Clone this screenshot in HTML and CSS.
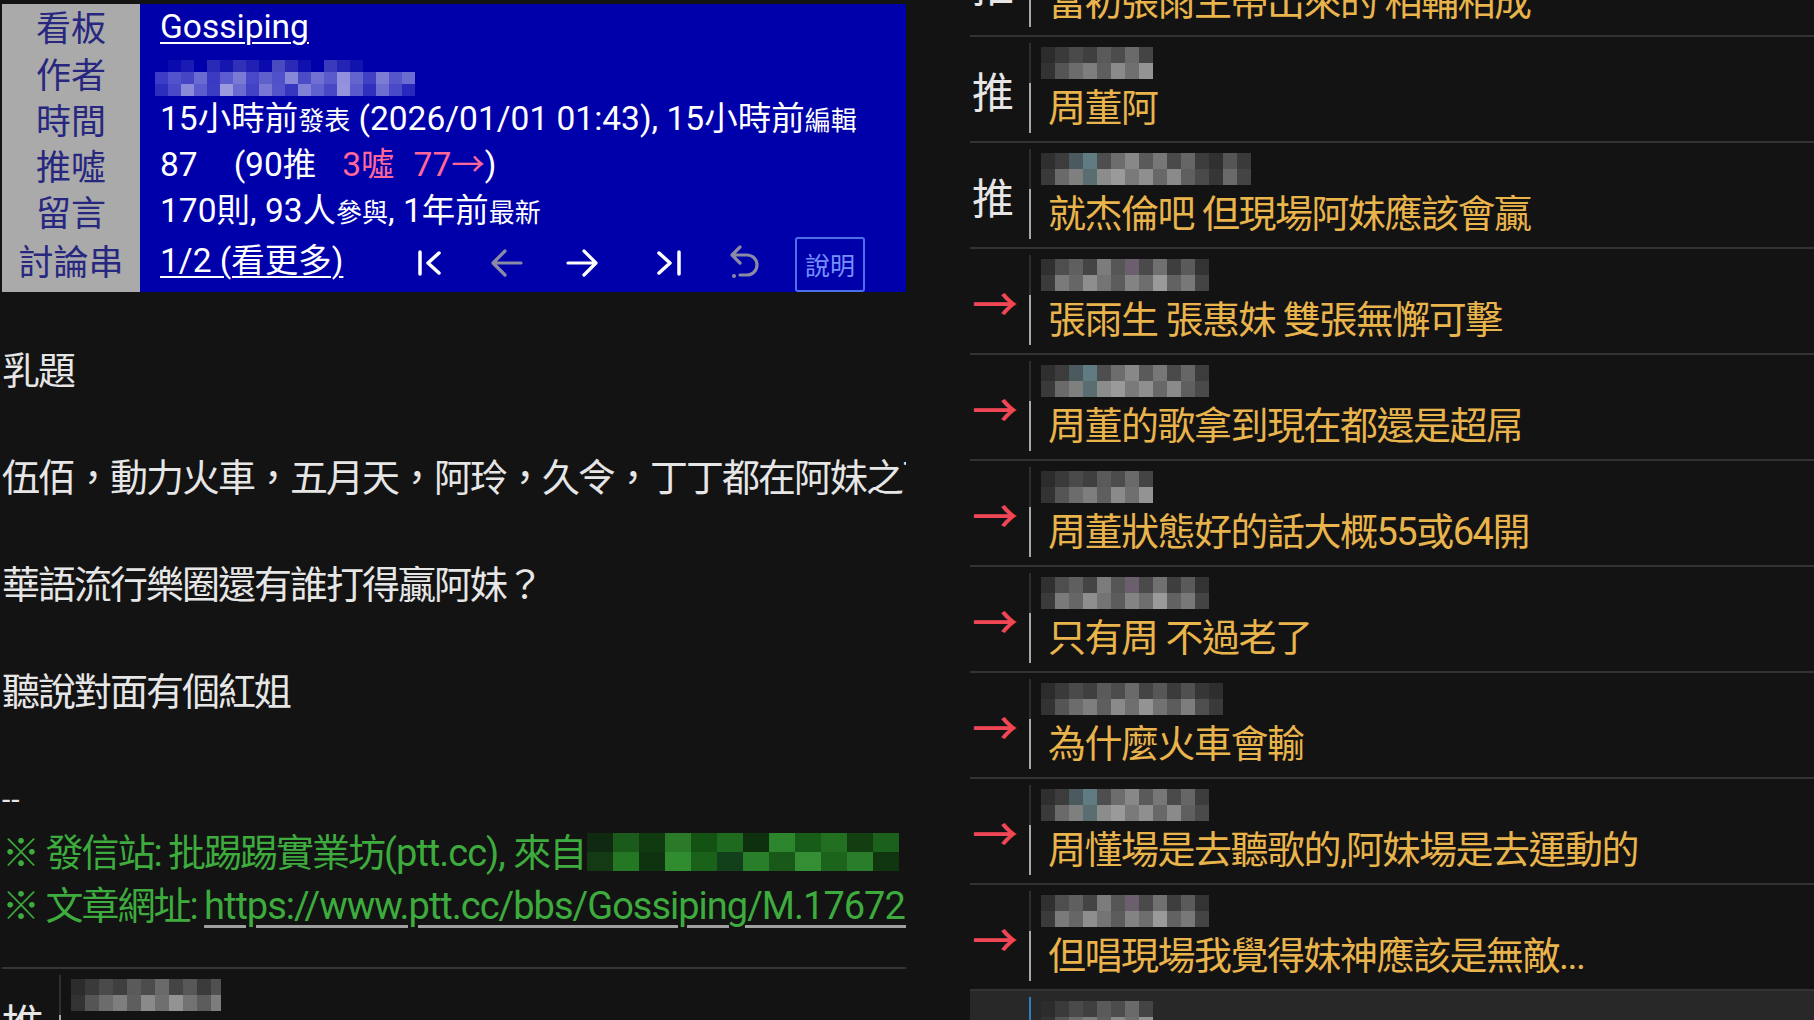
FILE: index.html
```html
<!DOCTYPE html>
<html lang="zh-Hant">
<head>
<meta charset="utf-8">
<title>Gossiping</title>
<link rel="stylesheet" href="styles.css">
</head>
<body>
<div class="page">
  <div class="main">
    <div class="meta">
      <div class="lbl">看板</div>
      <div class="val"><span class="link">Gossiping</span></div>
      <div class="lbl">作者</div>
      <div class="val"><span class="blur author"></span></div>
      <div class="lbl">時間</div>
      <div class="val">15小時前<small>發表</small> (2026/01/01 01:43), 15小時前<small>編輯</small></div>
      <div class="lbl">推噓</div>
      <div class="val">87<span class="gap1">(90推</span><span class="boo gap2">3噓</span><span class="boo gap3">77→</span>)</div>
      <div class="lbl">留言</div>
      <div class="val">170則, 93人<small>參與</small>, 1年前<small>最新</small></div>
      <div class="lbl lbl-last">討論串</div>
      <div class="val nav">
        <span class="thread"><span class="link">1/2 (看更多)</span></span>
        <svg class="ic ic-first" width="28" height="26" viewBox="0 0 28 26"><path d="M3 2v22M22 3L11 13l11 10" stroke="#fff" stroke-width="3.5" fill="none" stroke-linecap="round" stroke-linejoin="round"/></svg>
        <svg class="ic ic-prev" width="34" height="30" viewBox="0 0 34 30"><path d="M31 15H4M15 3L3 15l12 12" stroke="#8a8aa6" stroke-width="3.2" fill="none" stroke-linecap="round" stroke-linejoin="round"/></svg>
        <svg class="ic ic-next" width="34" height="30" viewBox="0 0 34 30"><path d="M3 15h27M19 3l12 12-12 12" stroke="#fff" stroke-width="3.2" fill="none" stroke-linecap="round" stroke-linejoin="round"/></svg>
        <svg class="ic ic-last" width="28" height="26" viewBox="0 0 28 26"><path d="M5 3l11 10L5 23M25 2v22" stroke="#fff" stroke-width="3.5" fill="none" stroke-linecap="round" stroke-linejoin="round"/></svg>
        <svg class="ic ic-undo" width="34" height="38" viewBox="0 0 34 38"><path d="M12 3L4 11l8 8M4 11h15a10 10 0 0 1 0 20h-7" stroke="#8a8aa6" stroke-width="3.2" fill="none" stroke-linecap="round" stroke-linejoin="round"/><circle cx="6" cy="32" r="2" fill="#8a8aa6"/></svg>
        <span class="help">說明</span>
      </div>
    </div>

    <div class="post">
      <div class="ln">乳題</div>
      <div class="ln"></div>
      <div class="ln">伍佰，動力火車，五月天，阿玲，久令，丁丁都在阿妹之下</div>
      <div class="ln"></div>
      <div class="ln">華語流行樂圈還有誰打得贏阿妹？</div>
      <div class="ln"></div>
      <div class="ln">聽說對面有個紅姐</div>
      <div class="ln"></div>
      <div class="ln dashes">--</div>
      <div class="ln green">※ 發信站: 批踢踢實業坊<span class="latin">(ptt.cc), </span>來自<span class="blur ip"></span></div>
      <div class="ln green">※ 文章網址: <span class="url">https://www.ptt.cc/bbs/Gossiping/M.1767202986.A.5B2.html</span></div>
    </div>
    <div class="sep"></div>
    <div class="row row-left">
      <div class="tag push">推</div>
      <div class="cbody">
        <div class="user"><span class="blur g1 w150"></span></div>
        <div class="msg"></div>
      </div>
    </div>
  </div>

  <div class="side">
    <div class="row">
      <div class="tag push">推</div>
      <div class="cbody"><div class="user"><span class="blur g2 w150"></span></div><div class="msg">當初張雨生帶出來的 相輔相成</div></div>
    </div>
    <div class="row">
      <div class="tag push">推</div>
      <div class="cbody"><div class="user"><span class="blur g1 w112"></span></div><div class="msg">周董阿</div></div>
    </div>
    <div class="row">
      <div class="tag push">推</div>
      <div class="cbody"><div class="user"><span class="blur g2 w210"></span></div><div class="msg">就杰倫吧 但現場阿妹應該會贏</div></div>
    </div>
    <div class="row">
      <div class="tag arrow">→</div>
      <div class="cbody"><div class="user"><span class="blur g3 w168"></span></div><div class="msg">張雨生 張惠妹 雙張無懈可擊</div></div>
    </div>
    <div class="row">
      <div class="tag arrow">→</div>
      <div class="cbody"><div class="user"><span class="blur g2 w168"></span></div><div class="msg">周董的歌拿到現在都還是超屌</div></div>
    </div>
    <div class="row">
      <div class="tag arrow">→</div>
      <div class="cbody"><div class="user"><span class="blur g1 w112"></span></div><div class="msg">周董狀態好的話大概55或64開</div></div>
    </div>
    <div class="row">
      <div class="tag arrow">→</div>
      <div class="cbody"><div class="user"><span class="blur g3 w168"></span></div><div class="msg">只有周 不過老了</div></div>
    </div>
    <div class="row">
      <div class="tag arrow">→</div>
      <div class="cbody"><div class="user"><span class="blur g1 w182"></span></div><div class="msg">為什麼火車會輸</div></div>
    </div>
    <div class="row">
      <div class="tag arrow">→</div>
      <div class="cbody"><div class="user"><span class="blur g2 w168"></span></div><div class="msg">周懂場是去聽歌的,阿妹場是去運動的</div></div>
    </div>
    <div class="row">
      <div class="tag arrow">→</div>
      <div class="cbody"><div class="user"><span class="blur g3 w168"></span></div><div class="msg">但唱現場我覺得妹神應該是無敵...</div></div>
    </div>
    <div class="row row-active">
      <div class="tag"></div>
      <div class="cbody"><div class="user"><span class="blur g1 w112"></span></div><div class="msg"></div></div>
    </div>
  </div>
</div>
</body>
</html>
```

FILE: styles.css
```css
html, body {
  margin: 0;
  padding: 0;
}

body {
  background: #131313;
  width: 1814px;
  height: 1020px;
  overflow: hidden;
  font-family: Roboto, "Noto Sans CJK TC", sans-serif;
  color: #e6e6e6;
}

.page {
  display: flex;
  height: 1020px;
  overflow: hidden;
}

/* ---------- left column ---------- */
.main {
  width: 904px;
  padding-left: 2px;
  flex: none;
  overflow: hidden;
}

.meta {
  margin-top: 4px;
  display: grid;
  grid-template-columns: 138px 1fr;
  grid-template-rows: repeat(5, 46px) 58px;
  background: #0000aa;
}

.lbl {
  background: #aaaaaa;
  color: #27277f;
  font-family: "Noto Sans CJK TC", sans-serif;
  font-size: 35px;
  line-height: 46px;
  text-align: center;
}

.lbl:first-child {
  line-height: 44px;
}

.lbl-last {
  line-height: 52px;
}

.val {
  padding-left: 20px;
  font-size: 33.5px;
  line-height: 46px;
  color: #ffffff;
  white-space: nowrap;
  overflow: hidden;
}

.val small {
  font-size: 26px;
}

.link {
  text-decoration: underline;
  text-decoration-thickness: 2px;
  text-underline-offset: 4px;
}

.gap1 { margin-left: 36px; }
.gap2 { margin-left: 26px; }
.gap3 { margin-left: 19px; }

.boo {
  color: #ff6699;
}

.nav {
  display: flex;
  align-items: center;
}

.thread {
  display: inline-block;
  width: 196px;
  flex: none;
  margin-top: -4px;
}

.ic {
  flex: none;
  display: block;
}

.ic-first { margin-left: 61px; }
.ic-prev { margin-left: 45px; }
.ic-next { margin-left: 41px; }
.ic-last { margin-left: 55px; }
.ic-undo { margin-left: 46px; }

.help {
  margin-left: 33px;
  width: 70px;
  height: 55px;
  box-sizing: border-box;
  border: 2px solid #4d6fea;
  border-radius: 3px;
  color: #7690ff;
  font-family: "Noto Sans CJK TC", sans-serif;
  font-size: 25px;
  line-height: 1;
  display: flex;
  align-items: center;
  justify-content: center;
  flex: none;
  margin-top: 2px;
}

.post {
  margin-top: 53px;
  font-size: 38px;
  letter-spacing: -2px;
  line-height: 53.5px;
  color: #e6e6e6;
}

.ln {
  height: 53.5px;
  white-space: pre;
}

.dashes {
  letter-spacing: 1px;
  font-size: 30px;
}

.green {
  color: #3dab3d;
}

.latin {
  letter-spacing: -1px;
}

.url {
  letter-spacing: -1px;
  text-decoration: underline;
  text-decoration-color: #a0a0a0;
  text-decoration-thickness: 3px;
  text-underline-offset: 6px;
}

.sep {
  height: 2px;
  background: #353535;
  margin-top: 33px;
}

/* ---------- pixelated (censored) blocks ---------- */
.blur {
  display: inline-block;
  vertical-align: middle;
  height: 32px;
}

.author {
  width: 260px;
  height: 36px;
  margin-left: -5px;
  margin-top: 6px;
  background:
    linear-gradient(90deg, #0000aa 0 13px, #0a0aae 13px 26px, #1a1ab4 26px 39px, #0000aa 39px 52px, #2a2ab8 52px 65px, #1515b0 65px 78px, #3030b8 78px 91px, #2020b4 91px 104px, #0a0aae 104px 117px, #4a4ac0 117px 130px, #2a2ab6 130px 143px, #1010ae 143px 156px, #0000aa 156px 169px, #3a3abc 169px 182px, #2424b4 182px 195px, #1212ae 195px 208px, #0000aa 208px 260px) top / 100% 12px no-repeat,
    linear-gradient(90deg, #3c3cc8 0 13px, #5252cc 13px 26px, #4545c6 26px 39px, #6a6ad0 39px 52px, #3a3ac2 52px 65px, #5c5cd0 65px 78px, #7a7ad4 78px 91px, #4848c8 91px 104px, #6060cc 104px 117px, #5050ca 117px 130px, #8888d8 130px 143px, #4c4cc6 143px 156px, #7070d2 156px 169px, #5a5acc 169px 182px, #9090dc 182px 195px, #6464ce 195px 208px, #4040c4 208px 221px, #7c7cd4 221px 234px, #5656ca 234px 247px, #6c6cd0 247px 260px) center / 100% 12px no-repeat,
    linear-gradient(90deg, #2e2ebe 0 13px, #4a4ac8 13px 26px, #8a8ad8 26px 39px, #5c5cce 39px 52px, #3c3cc2 52px 65px, #9a9adc 65px 78px, #6a6ad0 78px 91px, #4242c4 91px 104px, #7878d4 104px 117px, #5252ca 117px 130px, #3636c0 130px 143px, #8080d6 143px 156px, #6060ce 156px 169px, #4848c6 169px 182px, #9494dc 182px 195px, #5a5acc 195px 208px, #3030be 208px 221px, #6e6ed2 221px 234px, #4a4ac8 234px 247px, #2828bc 247px 260px) bottom / 100% 12px no-repeat;
}

.ip {
  width: 312px;
  height: 38px;
  margin-left: 2px;
  margin-top: -6px;
  background:
    linear-gradient(90deg, #0f2a10 0 26px, #1a5a1a 26px 52px, #103a10 52px 78px, #2a7a2a 78px 104px, #145214 104px 130px, #1e6a1e 130px 156px, #0e300e 156px 182px, #2c842c 182px 208px, #175c17 208px 234px, #226f22 234px 260px, #123e12 260px 286px, #1b601b 286px 312px) top / 100% 19px no-repeat,
    linear-gradient(90deg, #133a13 0 26px, #247824 26px 52px, #0f320f 52px 78px, #2f8c2f 78px 104px, #1a621a 104px 130px, #12401a 130px 156px, #297f29 156px 182px, #185818 182px 208px, #348f34 208px 234px, #1c641c 234px 260px, #2a7d2a 260px 286px, #103610 286px 312px) bottom / 100% 19px no-repeat;
}

.g1 {
  background:
    linear-gradient(90deg, #2c2c2c 0 14px, #3a3a3a 14px 28px, #4a4a4a 28px 42px, #3f3f3f 42px 56px, #5a5a5a 56px 70px, #4c4c4c 70px 84px, #6a6a6a 84px 98px, #444444 98px 112px, #575757 112px 126px, #3b3b3b 126px 140px, #505050 140px 154px, #363636 154px 168px, #2e2e2e 168px 182px) top / 100% 16px no-repeat,
    linear-gradient(90deg, #333333 0 14px, #555555 14px 28px, #6c6c6c 28px 42px, #7e7e7e 42px 56px, #5e5e5e 56px 70px, #8a8a8a 70px 84px, #6f6f6f 84px 98px, #939393 98px 112px, #727272 112px 126px, #5c5c5c 126px 140px, #7d7d7d 140px 154px, #4e4e4e 154px 168px, #3a3a3a 168px 182px) bottom / 100% 16px no-repeat;
}

.g2 {
  background:
    linear-gradient(90deg, #2f2f2f 0 14px, #3c3c3c 14px 28px, #4b5a5e 28px 42px, #607b82 42px 56px, #4e4e4e 56px 70px, #6d6d6d 70px 84px, #888888 84px 98px, #5a5a5a 98px 112px, #777777 112px 126px, #4a4a4a 126px 140px, #666666 140px 154px, #3c3c3c 154px 168px, #303030 168px 182px, #555555 182px 196px, #3a3a3a 196px 210px) top / 100% 16px no-repeat,
    linear-gradient(90deg, #3a3a3a 0 14px, #6a6a6a 14px 28px, #7f7f7f 28px 42px, #5a6e72 42px 56px, #8c8c8c 56px 70px, #9a9a9a 70px 84px, #7a7a7a 84px 98px, #8f8f8f 98px 112px, #686868 112px 126px, #8a8a8a 126px 140px, #5f5f5f 140px 154px, #4a4a4a 154px 168px, #363636 168px 182px, #6a6a6a 182px 196px, #444444 196px 210px) bottom / 100% 16px no-repeat;
}

.g3 {
  background:
    linear-gradient(90deg, #303030 0 14px, #4e4e4e 14px 28px, #5f5f5f 28px 42px, #444444 42px 56px, #7c7c7c 56px 70px, #565656 70px 84px, #6b5f6d 84px 98px, #4a4a4a 98px 112px, #707070 112px 126px, #3e3e3e 126px 140px, #5a5a5a 140px 154px, #333333 154px 168px) top / 100% 16px no-repeat,
    linear-gradient(90deg, #3b3b3b 0 14px, #7a7a7a 14px 28px, #666666 28px 42px, #8e8e8e 42px 56px, #747474 56px 70px, #5c5c5c 70px 84px, #838383 84px 98px, #6e6e6e 98px 112px, #9a9a9a 112px 126px, #626262 126px 140px, #787878 140px 154px, #444444 154px 168px) bottom / 100% 16px no-repeat;
}

.w112 { width: 112px; }
.w150 { width: 150px; }
.w168 { width: 168px; }
.w182 { width: 182px; }
.w210 { width: 210px; }

/* ---------- comment rows ---------- */
.side {
  margin-left: 64px;
  flex: 1;
  min-width: 0;
  margin-top: -69px;
  overflow: hidden;
}

.row {
  display: flex;
  height: 106px;
  box-sizing: border-box;
  border-bottom: 2px solid #333333;
}

.row-active {
  background: #282828;
  border-bottom: none;
}

.row-left {
  border-bottom: none;
}

.tag {
  width: 59px;
  flex: none;
  box-sizing: border-box;
  padding-left: 2px;
  display: flex;
  align-items: center;
  font-family: "Noto Sans CJK TC", sans-serif;
}

.row-left .tag {
  width: 57px;
  padding-left: 0;
}

.push {
  font-size: 42px;
  color: #e6e6e6;
}

.arrow {
  font-size: 46px;
  font-weight: 500;
  color: #ef4755;
}

.cbody {
  flex: 1;
  min-width: 0;
  padding-top: 6px;
}

.user {
  height: 40px;
  box-sizing: border-box;
  border-left: 2px solid #2e2e2e;
  padding-left: 10px;
  display: flex;
  align-items: center;
}

.row-active .user {
  border-left-color: #2f7fc0;
}

.msg {
  height: 50px;
  line-height: 50px;
  border-left: 2px solid #a8a8a8;
  padding-left: 17px;
  color: #e9b44c;
  font-size: 38px;
  letter-spacing: -1.5px;
  white-space: nowrap;
  overflow: hidden;
}
```
